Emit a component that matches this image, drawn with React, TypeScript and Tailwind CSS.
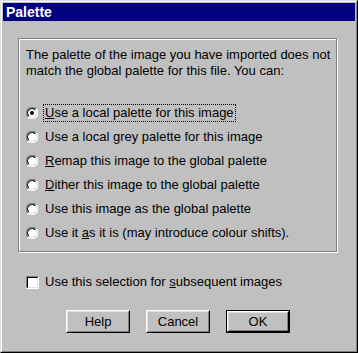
import React from "react";

const Radio = ({ checked }: { checked?: boolean }) => (
  <svg width="12" height="12" viewBox="0 0 12 12" className="shrink-0">
    <circle cx="6" cy="6" r="5" fill="#ffffff" />
    <path d="M10.24 1.76 A6 6 0 0 0 1.76 10.24" fill="none" stroke="#808080" strokeWidth="1.2" transform="translate(0 0)" />
    <path d="M9.18 2.82 A4.5 4.5 0 0 0 2.82 9.18" fill="none" stroke="#000000" strokeWidth="1.1" />
    <path d="M1.76 10.24 A6 6 0 0 0 10.24 1.76" fill="none" stroke="#ffffff" strokeWidth="1.2" />
    <path d="M2.82 9.18 A4.5 4.5 0 0 0 9.18 2.82" fill="none" stroke="#dfdfdf" strokeWidth="1.1" />
    {checked && <circle cx="6" cy="6" r="2" fill="#000000" />}
  </svg>
);

const Checkbox = () => (
  <div className="w-[13px] h-[13px] shrink-0 border border-t-[#808080] border-l-[#808080] border-r-white border-b-white">
    <div className="w-full h-full bg-white border border-t-black border-l-black border-r-[#dfdfdf] border-b-[#dfdfdf]" />
  </div>
);

const Button = ({ children, isDefault }: { children: React.ReactNode; isDefault?: boolean }) => (
  <div className={`w-[64px] h-[23px] ${isDefault ? "border border-black" : ""}`}>
    <div className="w-full h-full border border-t-white border-l-white border-r-black border-b-black">
      <div className="w-full h-full flex items-center justify-center border border-t-[#dfdfdf] border-l-[#dfdfdf] border-r-[#808080] border-b-[#808080] text-[13px] text-black">
        {children}
      </div>
    </div>
  </div>
);

const options: React.ReactNode[] = [
  <><u>U</u>se a local palette for this image</>,
  <>Use a local <u>g</u>rey palette for this image</>,
  <><u>R</u>emap this image to the global palette</>,
  <><u>D</u>ither this image to the global palette</>,
  <>Use this image as the <u>g</u>lobal palette</>,
  <>Use it <u>a</u>s it is (may introduce colour shifts).</>,
];

export default function App() {
  return (
    <div
      className="w-[358px] h-[353px] bg-[#c0c0c0] border border-t-[#dfdfdf] border-l-[#dfdfdf] border-r-black border-b-black"
      style={{ fontFamily: '"Liberation Sans", Arial, sans-serif' }}
    >
      <div className="w-full h-full flex flex-col p-px border border-t-white border-l-white border-r-[#808080] border-b-[#808080]">
        <div className="h-[18px] bg-[#000080] flex items-center pl-[3px] text-white font-bold text-[14px] leading-none">
          Palette
        </div>
        <div className="flex flex-col px-[15px] pt-[17px]">
          <div className="w-[319px] h-[214px] border border-[#808080] shadow-[inset_1px_1px_0_#fff,1px_1px_0_#fff] pl-[7px] pt-[8px] text-[13px] leading-[16px] text-black">
            <p>
              The palette of the image you have imported does not
              <br />
              match the global palette for this file. You can:
            </p>
            <div className="flex flex-col mt-[22px]">
              {options.map((label, i) => (
                <div key={i} className="h-[24px] flex items-center gap-[5px]">
                  <Radio checked={i === 0} />
                  <span className={`px-px leading-[16px] ${i === 0 ? "border border-dotted border-black" : "border border-transparent"}`}>
                    {label}
                  </span>
                </div>
              ))}
            </div>
          </div>
          <div className="flex items-center gap-[6px] pl-[8px] mt-[22px] text-[13px] leading-[16px] text-black">
            <Checkbox />
            <span>
              Use this selection for <u>s</u>ubsequent images
            </span>
          </div>
          <div className="flex gap-[16px] pl-[48px] mt-[20px]">
            <Button>Help</Button>
            <Button>Cancel</Button>
            <Button isDefault>OK</Button>
          </div>
        </div>
      </div>
    </div>
  );
}
